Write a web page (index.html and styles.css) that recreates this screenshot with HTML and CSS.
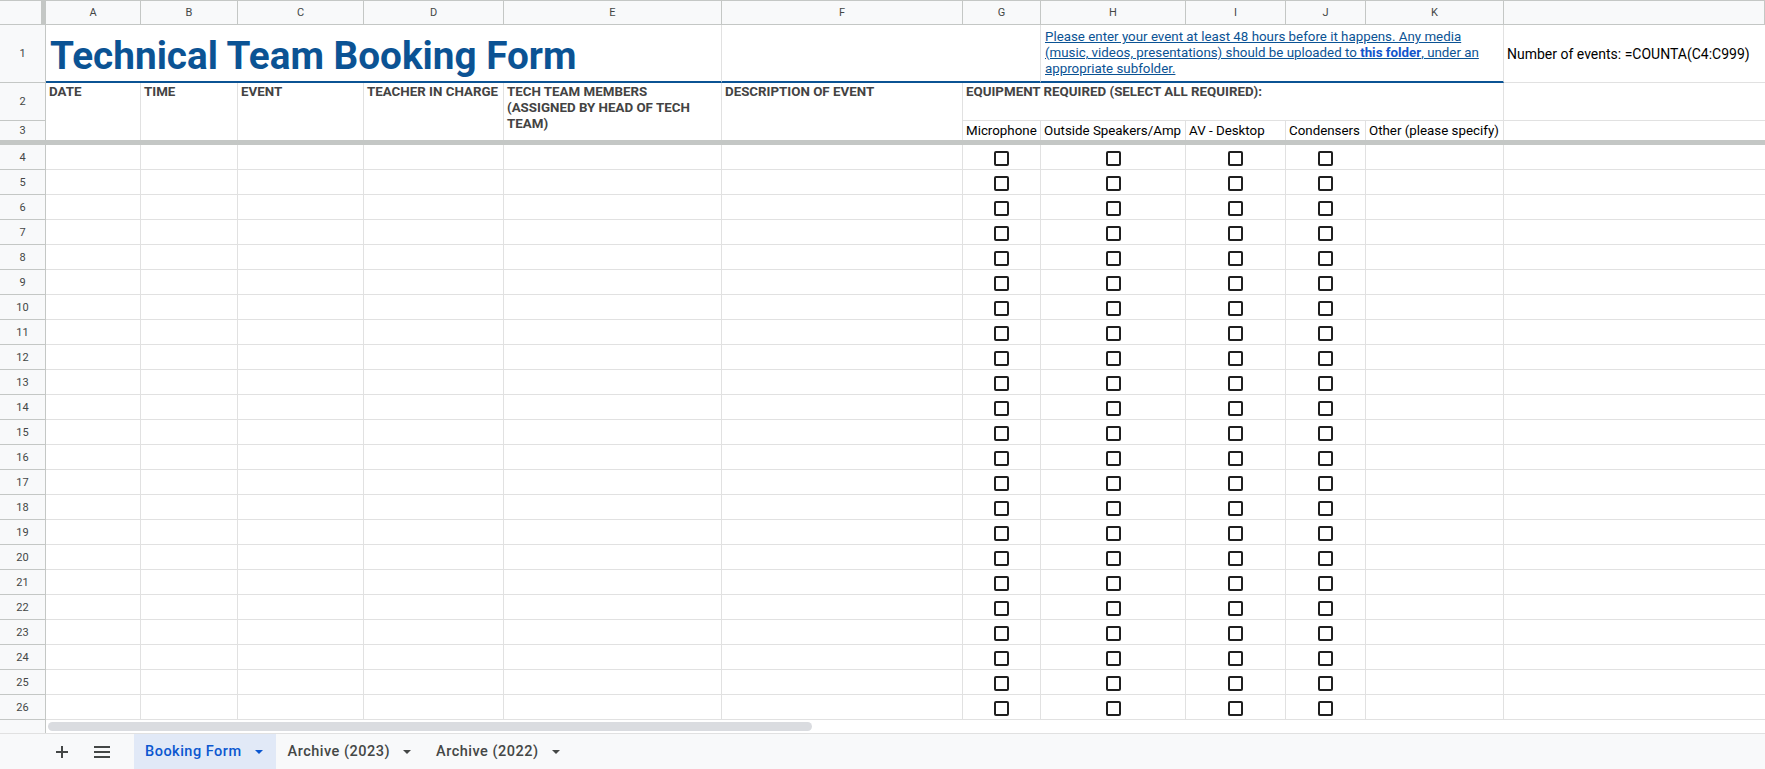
FILE: index.html
```html
<!DOCTYPE html>
<html lang="en">
<head>
<meta charset="utf-8">
<title>Technical Team Booking Form</title>
<link rel="stylesheet" href="styles.css">
</head>
<body>
<div class="sheet">
  <div class="colhead">
    <div class="corner"></div>
    <div class="ch">A</div><div class="ch">B</div><div class="ch">C</div><div class="ch">D</div><div class="ch">E</div><div class="ch">F</div><div class="ch">G</div><div class="ch">H</div><div class="ch">I</div><div class="ch">J</div><div class="ch">K</div><div class="ch"></div>
  </div>

  <div class="frozen">
    <div class="rh rh-1">1</div>
    <div class="c title span5 blue">Technical Team Booking Form</div>
    <div class="c span2 blue"></div>
    <div class="c note span4 blue">
      <span class="line">Please enter your event at least 48 hours before it happens. Any media</span>
      <span class="line">(music, videos, presentations) should be uploaded to <b>this folder</b>, under an</span>
      <span class="line">appropriate subfolder.</span>
    </div>
    <div class="c count">Number of events: =COUNTA(C4:C999)</div>

    <div class="rh">2</div>
    <div class="c lab tall">DATE</div>
    <div class="c lab tall">TIME</div>
    <div class="c lab tall">EVENT</div>
    <div class="c lab tall">TEACHER IN CHARGE</div>
    <div class="c lab tall">TECH TEAM MEMBERS<br>(ASSIGNED BY HEAD OF TECH<br>TEAM)</div>
    <div class="c lab tall">DESCRIPTION OF EVENT</div>
    <div class="c lab span5">EQUIPMENT REQUIRED (SELECT ALL REQUIRED):</div>
    <div class="c last"></div>

    <div class="rh rh-3">3</div>
    <div class="c sub">Microphone</div>
    <div class="c sub">Outside Speakers/Amp</div>
    <div class="c sub">AV - Desktop</div>
    <div class="c sub">Condensers</div>
    <div class="c sub">Other (please specify)</div>
    <div class="c sub last"></div>
  </div>

  <div class="freeze"></div>

  <div class="rows">
    <div class="row"><div class="rh">4</div><div class="c"></div><div class="c"></div><div class="c"></div><div class="c"></div><div class="c"></div><div class="c"></div><div class="c cb"><i></i></div><div class="c cb"><i></i></div><div class="c cb"><i></i></div><div class="c cb"><i></i></div><div class="c"></div><div class="c"></div></div>
    <div class="row"><div class="rh">5</div><div class="c"></div><div class="c"></div><div class="c"></div><div class="c"></div><div class="c"></div><div class="c"></div><div class="c cb"><i></i></div><div class="c cb"><i></i></div><div class="c cb"><i></i></div><div class="c cb"><i></i></div><div class="c"></div><div class="c"></div></div>
    <div class="row"><div class="rh">6</div><div class="c"></div><div class="c"></div><div class="c"></div><div class="c"></div><div class="c"></div><div class="c"></div><div class="c cb"><i></i></div><div class="c cb"><i></i></div><div class="c cb"><i></i></div><div class="c cb"><i></i></div><div class="c"></div><div class="c"></div></div>
    <div class="row"><div class="rh">7</div><div class="c"></div><div class="c"></div><div class="c"></div><div class="c"></div><div class="c"></div><div class="c"></div><div class="c cb"><i></i></div><div class="c cb"><i></i></div><div class="c cb"><i></i></div><div class="c cb"><i></i></div><div class="c"></div><div class="c"></div></div>
    <div class="row"><div class="rh">8</div><div class="c"></div><div class="c"></div><div class="c"></div><div class="c"></div><div class="c"></div><div class="c"></div><div class="c cb"><i></i></div><div class="c cb"><i></i></div><div class="c cb"><i></i></div><div class="c cb"><i></i></div><div class="c"></div><div class="c"></div></div>
    <div class="row"><div class="rh">9</div><div class="c"></div><div class="c"></div><div class="c"></div><div class="c"></div><div class="c"></div><div class="c"></div><div class="c cb"><i></i></div><div class="c cb"><i></i></div><div class="c cb"><i></i></div><div class="c cb"><i></i></div><div class="c"></div><div class="c"></div></div>
    <div class="row"><div class="rh">10</div><div class="c"></div><div class="c"></div><div class="c"></div><div class="c"></div><div class="c"></div><div class="c"></div><div class="c cb"><i></i></div><div class="c cb"><i></i></div><div class="c cb"><i></i></div><div class="c cb"><i></i></div><div class="c"></div><div class="c"></div></div>
    <div class="row"><div class="rh">11</div><div class="c"></div><div class="c"></div><div class="c"></div><div class="c"></div><div class="c"></div><div class="c"></div><div class="c cb"><i></i></div><div class="c cb"><i></i></div><div class="c cb"><i></i></div><div class="c cb"><i></i></div><div class="c"></div><div class="c"></div></div>
    <div class="row"><div class="rh">12</div><div class="c"></div><div class="c"></div><div class="c"></div><div class="c"></div><div class="c"></div><div class="c"></div><div class="c cb"><i></i></div><div class="c cb"><i></i></div><div class="c cb"><i></i></div><div class="c cb"><i></i></div><div class="c"></div><div class="c"></div></div>
    <div class="row"><div class="rh">13</div><div class="c"></div><div class="c"></div><div class="c"></div><div class="c"></div><div class="c"></div><div class="c"></div><div class="c cb"><i></i></div><div class="c cb"><i></i></div><div class="c cb"><i></i></div><div class="c cb"><i></i></div><div class="c"></div><div class="c"></div></div>
    <div class="row"><div class="rh">14</div><div class="c"></div><div class="c"></div><div class="c"></div><div class="c"></div><div class="c"></div><div class="c"></div><div class="c cb"><i></i></div><div class="c cb"><i></i></div><div class="c cb"><i></i></div><div class="c cb"><i></i></div><div class="c"></div><div class="c"></div></div>
    <div class="row"><div class="rh">15</div><div class="c"></div><div class="c"></div><div class="c"></div><div class="c"></div><div class="c"></div><div class="c"></div><div class="c cb"><i></i></div><div class="c cb"><i></i></div><div class="c cb"><i></i></div><div class="c cb"><i></i></div><div class="c"></div><div class="c"></div></div>
    <div class="row"><div class="rh">16</div><div class="c"></div><div class="c"></div><div class="c"></div><div class="c"></div><div class="c"></div><div class="c"></div><div class="c cb"><i></i></div><div class="c cb"><i></i></div><div class="c cb"><i></i></div><div class="c cb"><i></i></div><div class="c"></div><div class="c"></div></div>
    <div class="row"><div class="rh">17</div><div class="c"></div><div class="c"></div><div class="c"></div><div class="c"></div><div class="c"></div><div class="c"></div><div class="c cb"><i></i></div><div class="c cb"><i></i></div><div class="c cb"><i></i></div><div class="c cb"><i></i></div><div class="c"></div><div class="c"></div></div>
    <div class="row"><div class="rh">18</div><div class="c"></div><div class="c"></div><div class="c"></div><div class="c"></div><div class="c"></div><div class="c"></div><div class="c cb"><i></i></div><div class="c cb"><i></i></div><div class="c cb"><i></i></div><div class="c cb"><i></i></div><div class="c"></div><div class="c"></div></div>
    <div class="row"><div class="rh">19</div><div class="c"></div><div class="c"></div><div class="c"></div><div class="c"></div><div class="c"></div><div class="c"></div><div class="c cb"><i></i></div><div class="c cb"><i></i></div><div class="c cb"><i></i></div><div class="c cb"><i></i></div><div class="c"></div><div class="c"></div></div>
    <div class="row"><div class="rh">20</div><div class="c"></div><div class="c"></div><div class="c"></div><div class="c"></div><div class="c"></div><div class="c"></div><div class="c cb"><i></i></div><div class="c cb"><i></i></div><div class="c cb"><i></i></div><div class="c cb"><i></i></div><div class="c"></div><div class="c"></div></div>
    <div class="row"><div class="rh">21</div><div class="c"></div><div class="c"></div><div class="c"></div><div class="c"></div><div class="c"></div><div class="c"></div><div class="c cb"><i></i></div><div class="c cb"><i></i></div><div class="c cb"><i></i></div><div class="c cb"><i></i></div><div class="c"></div><div class="c"></div></div>
    <div class="row"><div class="rh">22</div><div class="c"></div><div class="c"></div><div class="c"></div><div class="c"></div><div class="c"></div><div class="c"></div><div class="c cb"><i></i></div><div class="c cb"><i></i></div><div class="c cb"><i></i></div><div class="c cb"><i></i></div><div class="c"></div><div class="c"></div></div>
    <div class="row"><div class="rh">23</div><div class="c"></div><div class="c"></div><div class="c"></div><div class="c"></div><div class="c"></div><div class="c"></div><div class="c cb"><i></i></div><div class="c cb"><i></i></div><div class="c cb"><i></i></div><div class="c cb"><i></i></div><div class="c"></div><div class="c"></div></div>
    <div class="row"><div class="rh">24</div><div class="c"></div><div class="c"></div><div class="c"></div><div class="c"></div><div class="c"></div><div class="c"></div><div class="c cb"><i></i></div><div class="c cb"><i></i></div><div class="c cb"><i></i></div><div class="c cb"><i></i></div><div class="c"></div><div class="c"></div></div>
    <div class="row"><div class="rh">25</div><div class="c"></div><div class="c"></div><div class="c"></div><div class="c"></div><div class="c"></div><div class="c"></div><div class="c cb"><i></i></div><div class="c cb"><i></i></div><div class="c cb"><i></i></div><div class="c cb"><i></i></div><div class="c"></div><div class="c"></div></div>
    <div class="row"><div class="rh">26</div><div class="c"></div><div class="c"></div><div class="c"></div><div class="c"></div><div class="c"></div><div class="c"></div><div class="c cb"><i></i></div><div class="c cb"><i></i></div><div class="c cb"><i></i></div><div class="c cb"><i></i></div><div class="c"></div><div class="c"></div></div>
  </div>
</div>

<div class="hscroll">
  <div class="hs-corner"></div>
  <div class="hs-track"><div class="thumb"></div></div>
</div>

<div class="tabs">
  <button class="tbtn" aria-label="Add sheet">
    <svg width="14" height="14" viewBox="0 0 14 14"><path d="M7 1v12M1 7h12" stroke="#444746" stroke-width="2" fill="none"/></svg>
  </button>
  <button class="tbtn" aria-label="All sheets">
    <svg width="18" height="12" viewBox="0 0 18 12"><path d="M1 1h16M1 6h16M1 11h16" stroke="#444746" stroke-width="2" fill="none"/></svg>
  </button>
  <div class="tab active">Booking Form<span class="caret"></span></div>
  <div class="tab">Archive (2023)<span class="caret"></span></div>
  <div class="tab">Archive (2022)<span class="caret"></span></div>
</div>
</body>
</html>
```

FILE: styles.css
```css
* { box-sizing: border-box; }

html, body {
  margin: 0;
  padding: 0;
}

body {
  width: 1765px;
  height: 769px;
  overflow: hidden;
  background: #ffffff;
  font-family: Roboto, "Liberation Sans", Arial, sans-serif;
  color: #000;
  display: flex;
  flex-direction: column;
}

.sheet {
  --cols: 46px 95px 97px 126px 140px 218px 241px 78px 145px 100px 80px 138px 1fr;
  display: flex;
  flex-direction: column;
}

/* column header */
.colhead {
  display: grid;
  grid-template-columns: var(--cols);
  height: 25px;
  border-top: 1px solid #c4c7c5;
}
.colhead .corner {
  background: #f8f9fa;
  border-right: 5px solid #c4c7c5;
  border-bottom: 1px solid #c4c7c5;
}
.ch {
  background: #f8f9fa;
  border-right: 1px solid #c4c7c5;
  border-bottom: 1px solid #c4c7c5;
  font-size: 11px;
  color: #444746;
  display: flex;
  align-items: center;
  justify-content: center;
}

/* frozen header rows 1-3 */
.frozen {
  display: grid;
  grid-template-columns: var(--cols);
  grid-template-rows: 58px 38px 19px;
}
.rh {
  background: #f8f9fa;
  border-right: 1px solid #c4c7c5;
  border-bottom: 1px solid #c4c7c5;
  font-size: 11px;
  color: #444746;
  display: flex;
  align-items: center;
  justify-content: center;
}
.rh-3 { border-bottom: 0; }

.c {
  border-right: 1px solid #e1e1e1;
  border-bottom: 1px solid #e1e1e1;
  padding: 0 3px;
  overflow: hidden;
  min-width: 0;
}
.c.last { border-right: 0; }
.span5 { grid-column: span 5; }
.span2 { grid-column: span 2; }
.span4 { grid-column: span 4; }
.tall { grid-row: span 2; border-bottom: 0; }

.blue { border-bottom: 2px solid #0b5394; }

.title {
  display: flex;
  align-items: flex-end;
  padding: 0 4px 2px;
  font-weight: 700;
  font-size: 38.7px;
  line-height: 46px;
  color: #0b5394;
  white-space: nowrap;
  overflow: visible;
}

.note {
  display: flex;
  flex-direction: column;
  justify-content: center;
  font-size: 13.33px;
  line-height: 16px;
  color: #0b5394;
  padding: 0 4px;
}
.note .line {
  white-space: nowrap;
  text-decoration: underline;
}
.note b {
  color: #1155cc;
  font-weight: 700;
}

.count {
  display: flex;
  align-items: center;
  padding: 0 3px;
  font-size: 14px;
  color: #000;
  white-space: nowrap;
  border-right: 0;
}

.lab {
  font-weight: 700;
  font-size: 13.33px;
  line-height: 16px;
  color: #434343;
  padding: 1px 3px 0;
  white-space: nowrap;
}

.sub {
  display: flex;
  align-items: flex-end;
  font-size: 13.33px;
  line-height: 16px;
  white-space: nowrap;
  padding: 0 3px 1px;
  border-bottom: 0;
}

.freeze {
  height: 5px;
  background: #c4c7c5;
}

/* data rows */
.row {
  display: grid;
  grid-template-columns: var(--cols);
  height: 25px;
}
.row .c:last-child { border-right: 0; }

.cb {
  display: flex;
  align-items: center;
  justify-content: center;
  padding-top: 2px;
}
.cb i {
  display: block;
  width: 15px;
  height: 15px;
  border: 2px solid #1f1f1f;
  border-radius: 2px;
}

/* horizontal scrollbar */
.hscroll {
  display: flex;
  height: 14px;
  border-bottom: 1px solid #e1e1e1;
}
.hs-corner {
  width: 46px;
  background: #f8f9fa;
  border-right: 1px solid #c4c7c5;
}
.hs-track {
  flex: 1;
  padding: 2px 0 0 2px;
}
.thumb {
  width: 764px;
  height: 9px;
  border-radius: 5px;
  background: #dadce0;
}

/* sheet tabs */
.tabs {
  flex: 1;
  background: #f8f9fa;
  display: flex;
  align-items: stretch;
  padding-left: 48px;
}
.tbtn {
  width: 28px;
  border: 0;
  background: transparent;
  padding: 0;
  display: flex;
  align-items: center;
  justify-content: center;
  margin-right: 12px;
}
.tbtn:nth-of-type(2) { margin-right: 18px; }
.tab {
  display: flex;
  align-items: center;
  font-size: 14.5px;
  letter-spacing: 0.5px;
  font-weight: 500;
  color: #444746;
  padding: 0 13px 0 12px;
  white-space: nowrap;
}
.tab.active {
  padding-left: 11px;
  background: #e1e9f7;
  color: #0b57d0;
}
.caret {
  width: 0;
  height: 0;
  border-left: 4px solid transparent;
  border-right: 4px solid transparent;
  border-top: 4px solid currentColor;
  margin-left: 13px;
}
```
